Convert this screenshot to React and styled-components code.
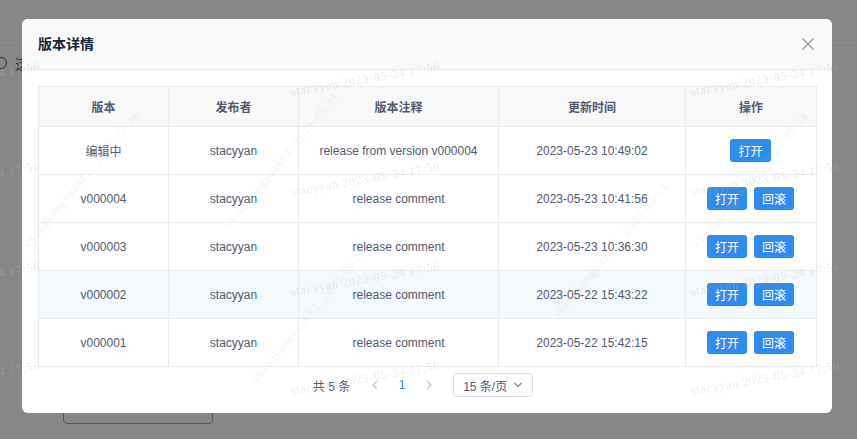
import React from 'react';
import styled, { createGlobalStyle } from 'styled-components';

const GlobalStyle = createGlobalStyle`
  html, body {
    margin: 0;
    padding: 0;
  }
  body {
    font-family: "Liberation Sans", "Noto Sans CJK SC", sans-serif;
    font-size: 12px;
    color: #515a6e;
    background: #fff;
  }
  * {
    box-sizing: border-box;
  }
`;

const versions = [
  { name: '编辑中', author: 'stacyyan', note: 'release from version v000004', time: '2023-05-23 10:49:02', editing: true },
  { name: 'v000004', author: 'stacyyan', note: 'release comment', time: '2023-05-23 10:41:56' },
  { name: 'v000003', author: 'stacyyan', note: 'release comment', time: '2023-05-23 10:36:30' },
  { name: 'v000002', author: 'stacyyan', note: 'release comment', time: '2023-05-22 15:43:22', hover: true },
  { name: 'v000001', author: 'stacyyan', note: 'release comment', time: '2023-05-22 15:42:15' },
];

const columns = [
  { title: '版本', width: 130 },
  { title: '发布者', width: 130 },
  { title: '版本注释', width: 200 },
  { title: '更新时间', width: 187 },
  { title: '操作', width: 131 },
];

// watermark start points (left / baseline of the text)
const marks = [];
[98, 198, 298, 397].forEach(y => {
  [-108, 292, 692].forEach(x => marks.push({ x, y }));
});

const diagonals = [
  { x: 258, y: 385 },
  { x: 230, y: 230 },
  { x: 30, y: 250 },
  { x: 560, y: 320 },
  { x: 700, y: 250 },
];

function App() {
  return (
    <>
      <GlobalStyle />
      <Page>
        <TopBar />
        <SubBar />
        <Notice>
          <NoticeIcon />
          <span>这是当前版本的说明</span>
        </Notice>
        <Spacer />
        <PageButton>新建版本</PageButton>
      </Page>

      <Mask />
      <ModalWrap>
        <Modal>
          <ModalHeader>
            <Title>版本详情</Title>
            <Close aria-label="close">
              <svg width="14" height="14" viewBox="0 0 14 14">
                <path d="M1.5 1.5 L12.5 12.5 M12.5 1.5 L1.5 12.5" stroke="#999" strokeWidth="1.3" fill="none" />
              </svg>
            </Close>
          </ModalHeader>
          <ModalBody>
            <Table>
              <colgroup>
                {columns.map(c => (
                  <col key={c.title} style={{ width: c.width }} />
                ))}
              </colgroup>
              <thead>
                <tr>
                  {columns.map(c => (
                    <Th key={c.title}>{c.title}</Th>
                  ))}
                </tr>
              </thead>
              <tbody>
                {versions.map(v => (
                  <Row key={v.name} $hover={v.hover}>
                    <Td>{v.name}</Td>
                    <Td>{v.author}</Td>
                    <Td>{v.note}</Td>
                    <Td>{v.time}</Td>
                    <Td>
                      <Actions>
                        <ActionButton>打开</ActionButton>
                        {!v.editing && <ActionButton>回滚</ActionButton>}
                      </Actions>
                    </Td>
                  </Row>
                ))}
              </tbody>
            </Table>
            <Pager>
              <Total>共 5 条</Total>
              <PageItem $disabled>
                <svg width="8" height="10" viewBox="0 0 8 10">
                  <path d="M6 1 L2 5 L6 9" stroke="currentColor" strokeWidth="1.3" fill="none" />
                </svg>
              </PageItem>
              <PageItem $active>1</PageItem>
              <PageItem $disabled>
                <svg width="8" height="10" viewBox="0 0 8 10">
                  <path d="M2 1 L6 5 L2 9" stroke="currentColor" strokeWidth="1.3" fill="none" />
                </svg>
              </PageItem>
              <SizeSelect>
                15 条/页
                <svg width="10" height="8" viewBox="0 0 10 8">
                  <path d="M1.5 2 L5 5.5 L8.5 2" stroke="#808695" strokeWidth="1.2" fill="none" />
                </svg>
              </SizeSelect>
            </Pager>
          </ModalBody>
        </Modal>
      </ModalWrap>

      <Watermarks>
        {marks.map((m, i) => (
          <Mark key={i} style={{ left: m.x, top: m.y - 12 }}>
            stacyyan 2023-05-24 17:56
          </Mark>
        ))}
        {diagonals.map((m, i) => (
          <DiagMark key={'d' + i} style={{ left: m.x, top: m.y - 12 }}>
            vkangkangyuakF1, 2023-05-24
          </DiagMark>
        ))}
      </Watermarks>
    </>
  );
}

const Page = styled.div`
  height: 100vh;
  display: flex;
  flex-direction: column;
  background: #fff;
`;

const TopBar = styled.div`
  height: 15px;
  border-bottom: 1px solid #f0f0f0;
`;

const SubBar = styled.div`
  height: 31px;
  border-bottom: 1px solid #e8eaec;
`;

const Notice = styled.div`
  display: flex;
  align-items: center;
  gap: 8px;
  margin: 7px 0 0 -5px;
  height: 20px;
  font-size: 14px;
  color: #17233d;
`;

const NoticeIcon = styled.span`
  width: 12px;
  height: 12px;
  border: 1.5px solid #17233d;
  border-radius: 50%;
`;

const Spacer = styled.div`
  flex: 1;
`;

const PageButton = styled.div`
  align-self: flex-start;
  margin: 0 0 15px 63px;
  width: 150px;
  height: 30px;
  border: 1px solid #708ab0;
  border-radius: 4px;
`;

const Mask = styled.div`
  position: fixed;
  inset: 0;
  background: rgba(55, 55, 55, 0.6);
`;

const ModalWrap = styled.div`
  position: fixed;
  inset: 0;
  padding: 19px 0 0 22px;
`;

const Modal = styled.div`
  width: 810px;
  background: #fff;
  border-radius: 6px;
  overflow: hidden;
`;

const ModalHeader = styled.div`
  height: 51px;
  padding: 0 16px;
  display: flex;
  align-items: center;
  justify-content: space-between;
  background: #f9f9f9;
  border-bottom: 1px solid #e8eaec;
`;

const Title = styled.div`
  font-size: 14px;
  font-weight: bold;
  color: #17233d;
  line-height: 20px;
`;

const Close = styled.div`
  display: flex;
  margin-right: 1px;
`;

const ModalBody = styled.div`
  padding: 16px 16px 16px;
`;

const Table = styled.table`
  width: 778px;
  table-layout: fixed;
  border-collapse: collapse;
  border: 1px solid #dcdee2;
`;

const Th = styled.th`
  height: 40px;
  padding: 0;
  background: #f8f8f9;
  border: 1px solid #e8eaec;
  font-weight: bold;
  color: #515a6e;
  text-align: center;
`;

const Row = styled.tr`
  background: ${p => (p.$hover ? '#f4f9fe' : '#fff')};
`;

const Td = styled.td`
  height: 48px;
  padding: 0;
  border: 1px solid #e8eaec;
  text-align: center;
  color: #515a6e;
`;

const Actions = styled.div`
  display: flex;
  justify-content: center;
  gap: 7px;
  padding-right: 1px;
`;

const ActionButton = styled.span`
  display: inline-flex;
  align-items: center;
  height: 23px;
  padding: 0 8px;
  border-radius: 3px;
  background: #2d8cf0;
  color: #fff;
  font-size: 12px;
`;

const Pager = styled.div`
  display: flex;
  align-items: center;
  justify-content: center;
  margin-top: 6px;
  padding-right: 8px;
  height: 24px;
`;

const Total = styled.span`
  margin-right: 13px;
  color: #515a6e;
`;

const PageItem = styled.span`
  display: inline-flex;
  align-items: center;
  justify-content: center;
  width: 24px;
  height: 24px;
  margin-right: 3px;
  color: ${p => (p.$active ? '#2d8cf0' : p.$disabled ? '#c5c8ce' : '#515a6e')};
`;

const SizeSelect = styled.span`
  display: inline-flex;
  align-items: center;
  gap: 6px;
  margin-left: 9px;
  height: 24px;
  padding: 0 9px;
  border: 1px solid #dcdee2;
  border-radius: 4px;
  color: #515a6e;
`;

const Watermarks = styled.div`
  position: fixed;
  inset: 0;
  pointer-events: none;
  overflow: hidden;
`;

const Mark = styled.span`
  position: absolute;
  white-space: nowrap;
  font-family: "Liberation Serif", serif;
  font-size: 12px;
  line-height: 12px;
  letter-spacing: 0.8px;
  color: rgba(190, 190, 190, 0.32);
  transform-origin: left bottom;
  transform: rotate(-10deg);
`;

const DiagMark = styled(Mark)`
  transform: rotate(-50deg);
  color: rgba(190, 190, 190, 0.2);
`;

export default App;
